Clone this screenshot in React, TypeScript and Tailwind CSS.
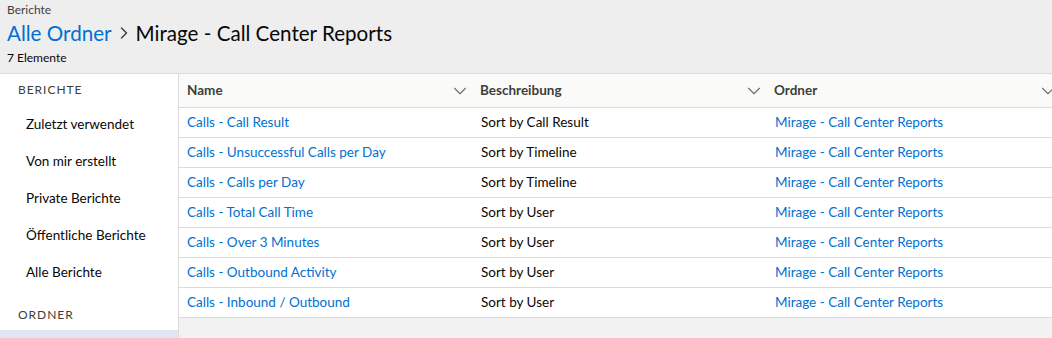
import { ChevronDown, ChevronRight } from "lucide-react";

const rows = [
  { name: "Calls - Call Result", desc: "Sort by Call Result" },
  { name: "Calls - Unsuccessful Calls per Day", desc: "Sort by Timeline" },
  { name: "Calls - Calls per Day", desc: "Sort by Timeline" },
  { name: "Calls - Total Call Time", desc: "Sort by User" },
  { name: "Calls - Over 3 Minutes", desc: "Sort by User" },
  { name: "Calls - Outbound Activity", desc: "Sort by User" },
  { name: "Calls - Inbound / Outbound", desc: "Sort by User" },
];

const navItems = [
  "Zuletzt verwendet",
  "Von mir erstellt",
  "Private Berichte",
  "Öffentliche Berichte",
  "Alle Berichte",
];

const font = "font-['Lato','Noto_Sans',sans-serif]";

export default function App() {
  return (
    <div className={`${font} flex h-[338px] w-[1052px] flex-col overflow-hidden bg-[#f3f2f2] text-[#080707]`}>
      <header className="h-[74px] shrink-0 border-b border-[#dddbda] bg-[#eeeeee] px-[7px] pt-[2px]">
        <p className="text-[12px] leading-[16px] text-[#3e3e3c]">Berichte</p>
        <div className="flex h-[30px] items-center text-[20.6px] leading-[30px]">
          <span className="text-[#0070d2]">Alle Ordner</span>
          <ChevronRight className="mx-[2px] h-[20px] w-[20px] text-[#3e3e3c]" strokeWidth={1.75} />
          <span>Mirage - Call Center Reports</span>
        </div>
        <p className="mt-[2px] text-[12px] leading-[16px]">7 Elemente</p>
      </header>

      <div className="flex min-h-0 flex-1">
        <aside className="w-[179px] shrink-0 border-r border-[#dddbda] bg-white">
          <div className="flex h-[32px] items-center pl-[18px] text-[12px] tracking-[0.08em] text-[#3e3e3c]">
            BERICHTE
          </div>
          {navItems.map((item) => (
            <div key={item} className="flex h-[37px] items-center pl-[26px] text-[13.5px]">
              {item}
            </div>
          ))}
          <div className="flex h-[39px] items-center pl-[18px] pt-[8px] text-[12px] tracking-[0.08em] text-[#3e3e3c]">
            ORDNER
          </div>
          <div className="h-[37px] bg-[#e3e5f5]" />
        </aside>

        <main className="min-w-0 flex-1 overflow-hidden">
          <div className="grid w-[881px] grid-cols-[293px_294px_294px] border-b border-[#dddbda] bg-[#fafaf9] text-[13.5px] font-bold text-[#3e3e3c]">
            {["Name", "Beschreibung", "Ordner"].map((h) => (
              <div key={h} className="flex h-[33px] items-center justify-between pl-[8px] pr-[1px]">
                <span>{h}</span>
                <ChevronDown className="h-[22px] w-[22px] text-[#706e6b]" strokeWidth={1.2} />
              </div>
            ))}
          </div>
          {rows.map((r) => (
            <div
              key={r.name}
              className="grid h-[30px] grid-cols-[293px_294px_1fr] items-center border-b border-[#dddbda] bg-white text-[13.5px]"
            >
              <span className="pl-[8px] text-[#0070d2]">{r.name}</span>
              <span className="pl-[9px]">{r.desc}</span>
              <span className="pl-[9px] text-[#0070d2]">Mirage - Call Center Reports</span>
            </div>
          ))}
        </main>
      </div>
    </div>
  );
}
